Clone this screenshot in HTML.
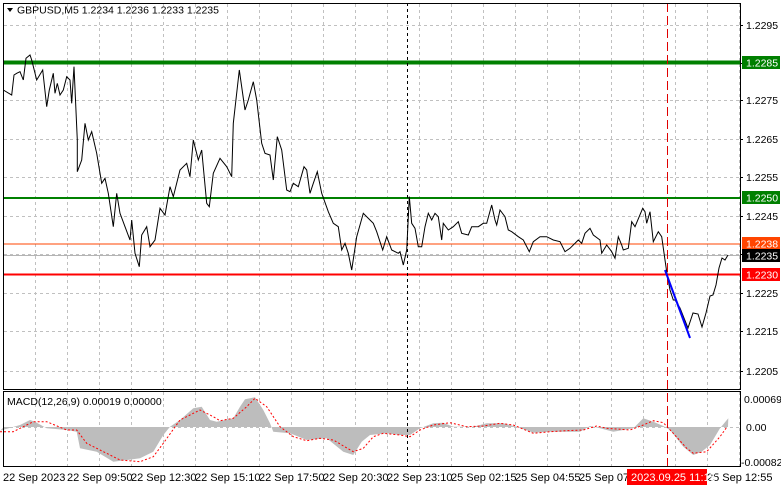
<!DOCTYPE html>
<html><head><meta charset="utf-8"><style>
html,body{margin:0;padding:0;background:#fff;}
svg{display:block;font-family:"Liberation Sans",sans-serif;}
</style></head><body>
<svg id="s" width="781" height="489" xmlns="http://www.w3.org/2000/svg">
<rect width="781" height="489" fill="#fff"/>
<g id="grid" stroke="#c0c0c0" stroke-dasharray="3,3" stroke-width="1"></g>
<g id="dyn"></g>
<line x1="3" y1="244" x2="740" y2="244" stroke="#ff4500" stroke-width="1"/>
<line x1="3" y1="255.5" x2="740" y2="255.5" stroke="#b4b4b4" stroke-width="1"/>
<line x1="3" y1="62.5" x2="740" y2="62.5" stroke="#008000" stroke-width="4"/>
<line x1="3" y1="198" x2="740" y2="198" stroke="#008000" stroke-width="2"/>
<line x1="3" y1="274.5" x2="740" y2="274.5" stroke="#ff0000" stroke-width="2"/>
<line x1="407.5" y1="3" x2="407.5" y2="467" stroke="#000" stroke-dasharray="3,3"/>
<line x1="667.5" y1="3" x2="667.5" y2="467" stroke="#e00000" stroke-dasharray="9,4"/>
<g id="price"></g>
<line x1="665" y1="270" x2="690" y2="338" stroke="#0000ff" stroke-width="2"/>
<rect x="3.5" y="3.5" width="737" height="386" fill="none" stroke="#000"/>
<rect x="3.5" y="391.5" width="737" height="75" fill="none" stroke="#000"/>
<polygon points="7,8 13,8 10,12" fill="#000"/>
<text x="17" y="13.5" font-size="10.5" fill="#000">GBPUSD,M5  1.2234 1.2236 1.2233 1.2235</text>
<text x="7" y="405" font-size="10.5" fill="#000">MACD(12,26,9) 0.00019 0.00000</text>
<g font-size="10.5" fill="#000" id="axis"></g>
<rect x="742" y="56" width="38" height="13" fill="#008000"/><text x="746" y="66.5" font-size="10.5" fill="#fff">1.2285</text>
<rect x="742" y="191" width="38" height="13" fill="#008000"/><text x="746" y="201.5" font-size="10.5" fill="#fff">1.2250</text>
<rect x="742" y="237" width="38" height="13" fill="#ff4500"/><text x="746" y="247.5" font-size="10.5" fill="#fff">1.2238</text>
<rect x="742" y="249" width="38" height="13" fill="#000"/><text x="746" y="259.5" font-size="10.5" fill="#fff">1.2235</text>
<rect x="742" y="268" width="38" height="13" fill="#ff0000"/><text x="746" y="278.5" font-size="10.5" fill="#fff">1.2230</text>
<text x="744" y="403" font-size="10.5">0.00069</text>
<text x="746" y="431" font-size="10.5">0.00</text>
<text x="741" y="466" font-size="10.5">-0.00082</text>
<g font-size="11" fill="#000" id="time"></g>
<rect x="627" y="469" width="80" height="16" fill="#ff0000"/>
<text x="631" y="481" font-size="11" fill="#fff">2023.09.25 11:15</text>
</svg>
<script>
var NS="http://www.w3.org/2000/svg",s=document.getElementById('s');
function el(p,t,a,txt){var e=document.createElementNS(NS,t);for(var k in a)e.setAttribute(k,a[k]);if(txt)e.textContent=txt;document.getElementById(p).appendChild(e);return e;}
for(var x=35.5;x<740;x+=32){el('grid','line',{x1:x,y1:4,x2:x,y2:389});el('grid','line',{x1:x,y1:392,x2:x,y2:466});}
var ys=[25,63,100,139,177,216,254,293,331,371];
ys.forEach(function(y){el('grid','line',{x1:4,y1:y+.5,x2:740,y2:y+.5});});
el('grid','line',{x1:4,y1:427.5,x2:740,y2:427.5});
var labs=["1.2295","1.2285","1.2275","1.2265","1.2255","1.2245","1.2235","1.2225","1.2215","1.2205"];
labs.forEach(function(l,i){el('axis','text',{x:746,y:ys[i]+4},l);el('axis','line',{x1:740,y1:ys[i]+.5,x2:743,y2:ys[i]+.5,stroke:'#000'});});
var tl=[[3,"22 Sep 2023"],[67,"22 Sep 09:50"],[131,"22 Sep 12:30"],[195,"22 Sep 15:10"],[259,"22 Sep 17:50"],[323,"22 Sep 20:30"],[387,"22 Sep 23:10"],[451,"25 Sep 02:15"],[515,"25 Sep 04:55"],[579,"25 Sep 07:35"],[707,"25 Sep 12:55"]];
tl.forEach(function(t){el('time','text',{x:t[0],y:481},t[1]);});
var a=[[10,150],[35,165],[42,105],[50,100],[60,95],[70,120],[78,55],[90,45],[95,60],[110,120],[128,90],[140,200],[148,150],[160,100],[165,160],[172,130],[180,165],[190,150],[200,110],[210,120],[215,190],[222,80],[232,300],[232,395],[245,360],[255,250],[265,300],[275,275],[290,340],[305,430],[315,415],[325,460],[340,560],[350,460],[360,520],[375,560],[390,600],[395,540],[405,640],[418,680],[425,585],[440,560],[450,620],[465,600],[480,505],[495,525],[510,440],[520,470],[540,390],[560,370],[570,410],[580,300],[595,360],[605,330],[620,490],[628,500],[640,400],[660,355],[680,380],[695,410],[700,250],[718,90],[735,210],[745,180],[760,125],[770,180],[785,310],[795,340],[810,345],[820,420],[832,290],[845,330],[860,450],[870,455],[880,430],[895,440],[912,380],[920,390],[930,460],[940,430],[952,395],[965,460],[985,515],[1000,550],[1015,560],[1025,630],[1035,610],[1045,640],[1055,690],[1070,590],[1090,520],[1110,540],[1120,550],[1130,575],[1148,630],[1160,590],[1175,630],[1195,640]];
var b=[[30,215],[40,255],[50,210],[58,50],[65,130],[75,145],[85,200],[95,200],[105,140],[115,100],[125,120],[135,100],[145,110],[155,180],[160,130],[175,150],[190,140],[205,125],[215,160],[235,165],[245,140],[265,140],[280,130],[290,130],[305,75],[315,120],[320,135],[330,90],[345,110],[355,150],[365,155],[385,170],[400,180],[418,215],[430,185],[450,170],[470,170],[490,180],[510,185],[525,215],[540,205],[565,180],[575,190],[585,160],[600,145],[610,165],[630,180],[635,220],[650,195],[665,215],[675,235],[685,170],[695,195],[700,210],[715,205],[725,125],[735,140],[758,85],[765,95],[770,130],[780,95],[790,185],[805,155],[815,170],[825,240],[830,275],[840,330],[850,360]];
var pts=a.map(function(p){return (p[0]/3).toFixed(1)+","+(40+p[1]/3).toFixed(1);});
pts=pts.concat(b.map(function(p){return (390+p[0]/3).toFixed(1)+","+(180+p[1]/3).toFixed(1);}));
pts=pts.concat(["675,300","680,308","684,318","688,328","693,313","698,314","702,327","706,313","710,296","713,295","716,285","719,268","722,258","725,260","728,255"]);
el('price','polyline',{points:pts.join(" "),fill:"none",stroke:"#000","stroke-width":1});
var h1=[[0,122],[60,105],[90,90],[105,95],[140,115],[200,120],[230,125],[240,175],[290,185],[340,215],[380,210],[420,205],[460,185],[490,135],[510,110],[540,90],[580,55],[605,50],[630,90],[650,95],[700,85],[720,50],[735,28],[765,22],[790,60],[810,100],[820,125],[870,130],[920,150],[980,145],[1030,185],[1060,195],[1085,155],[1110,135],[1160,130],[1200,135]];
var h2=[[30,135],[60,115],[100,100],[130,98],[160,110],[220,110],[260,100],[310,100],[350,110],[400,128],[450,125],[500,125],[540,125],[570,108],[600,115],[640,125],[700,115],[730,85],[760,95],[790,108],[810,120],[850,170],[880,195],[905,185],[930,165],[960,115],[985,85]];
var hp=h1.map(function(p){return [p[0]/3,390+p[1]/3];}).concat(h2.map(function(p){return [400+p[0]/3,390+p[1]/3];}));
var poly="4,427 "+hp.map(function(p){return p[0].toFixed(1)+","+p[1].toFixed(1);}).join(" ")+" 728,427";
el('dyn','polygon',{points:poly,fill:"#bdbdbd",stroke:"none"});
var s1=[[0,125],[40,125],[100,95],[140,95],[200,120],[230,120],[260,160],[300,180],[360,210],[420,215],[460,200],[490,160],[540,90],[600,60],[640,80],[660,92],[700,85],[740,50],[765,25],[800,50],[840,110],[880,140],[920,152],[960,145],[1000,150],[1060,185],[1090,175],[1120,140],[1150,130],[1200,135]];
var s2=[[30,140],[60,120],[100,105],[150,98],[200,110],[250,108],[300,100],[340,105],[400,130],[450,125],[500,122],[550,120],[590,108],[620,115],[690,120],[730,105],[760,92],[790,98],[820,130],[860,175],[880,190],[920,185],[960,140],[980,112]];
var sp=s1.map(function(p){return (p[0]/3).toFixed(1)+","+(390+p[1]/3).toFixed(1);}).concat(s2.map(function(p){return (400+p[0]/3).toFixed(1)+","+(390+p[1]/3).toFixed(1);}));
el('dyn','polyline',{points:sp.join(" "),fill:"none",stroke:"#ff0000","stroke-dasharray":"2,2","stroke-width":1});
</script>
</body></html>
